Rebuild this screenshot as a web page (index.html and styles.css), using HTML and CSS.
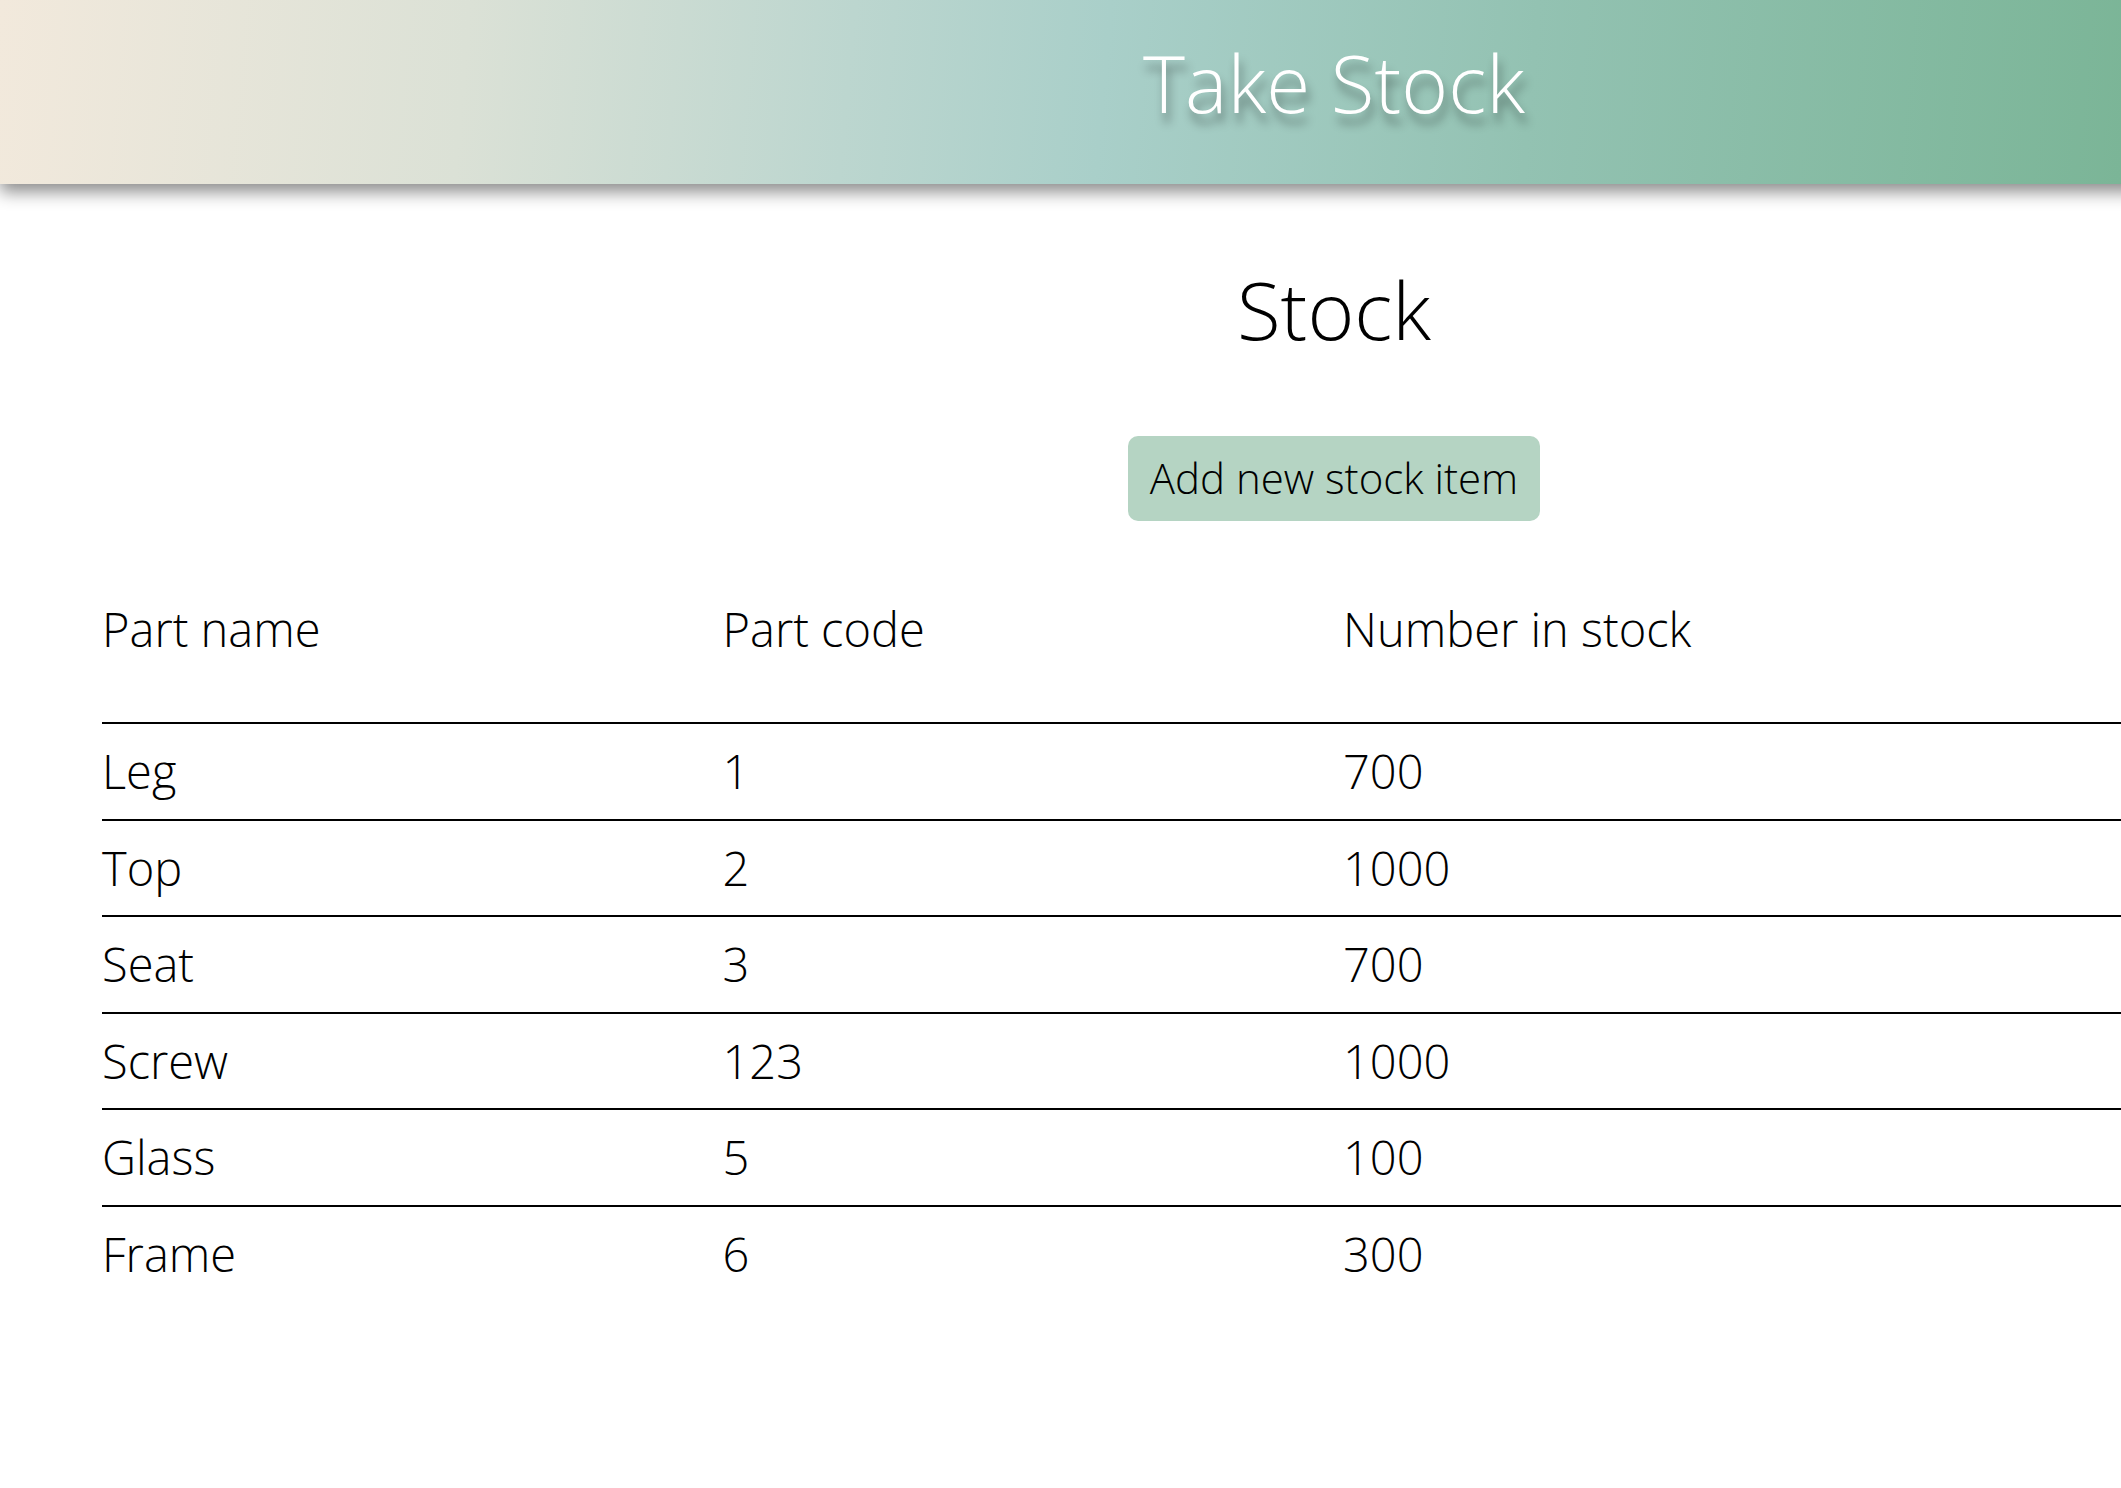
FILE: index.html
```html
<!DOCTYPE html>
<html lang="en">
<head>
<meta charset="utf-8">
<title>Take Stock</title>
<link rel="stylesheet" href="styles.css">
</head>
<body>
<div class="page">
  <header class="topbar">
    <h1 class="brand">Take Stock</h1>
  </header>
  <main class="content">
    <h2 class="title">Stock</h2>
    <div class="actions">
      <button class="btn-add" type="button">Add new stock item</button>
    </div>
    <table class="stock-table">
      <colgroup>
        <col class="col-name">
        <col class="col-code">
        <col class="col-count">
      </colgroup>
      <thead>
        <tr><th>Part name</th><th>Part code</th><th>Number in stock</th></tr>
      </thead>
      <tbody>
        <tr><td>Leg</td><td>1</td><td>700</td></tr>
        <tr><td>Top</td><td>2</td><td>1000</td></tr>
        <tr><td>Seat</td><td>3</td><td>700</td></tr>
        <tr><td>Screw</td><td>123</td><td>1000</td></tr>
        <tr><td>Glass</td><td>5</td><td>100</td></tr>
        <tr><td>Frame</td><td>6</td><td>300</td></tr>
      </tbody>
    </table>
  </main>
</div>
</body>
</html>
```

FILE: styles.css
```css
html {
  overflow: hidden;
}

body {
  margin: 0;
  background: #ffffff;
  color: #000000;
  font-family: "Open Sans", "Noto Sans", "Liberation Sans", sans-serif;
  font-weight: 300;
}

.page {
  width: 2668px;
}

.topbar {
  position: relative;
  z-index: 1;
  box-sizing: border-box;
  height: 184px;
  padding-top: 42px;
  background-color: #7bb597;
  background-image: linear-gradient(95deg, #f2e9dc 0%, #dbe1d6 22%, #bcd6cf 40%, #a9cfc9 52%, #93c2b2 72%, #7bb597 100%);
  background-size: 2121px 100%;
  background-repeat: no-repeat;
  box-shadow: 0 8px 16px rgba(0, 0, 0, 0.45);
}

.brand {
  margin: 0;
  font-size: 80px;
  line-height: 80px;
  font-weight: 300;
  color: #ffffff;
  text-align: center;
  text-shadow: 3px 10px 10px rgba(0, 0, 0, 0.38);
}

.content {
  padding-top: 85px;
}

.title {
  margin: 0;
  font-size: 80px;
  line-height: 80px;
  font-weight: 300;
  text-align: center;
}

.actions {
  display: flex;
  justify-content: center;
  margin-top: 87px;
}

.btn-add {
  box-sizing: border-box;
  height: 85px;
  padding: 14px 22px 15px;
  border: none;
  border-radius: 10px;
  background: #b5d4c3;
  color: #000000;
  font-family: inherit;
  font-weight: 350;
  font-size: 42px;
  line-height: 56px;
}

.stock-table {
  margin: 60px 0 0 102px;
  width: 2484px;
  table-layout: fixed;
  border-collapse: separate;
  border-spacing: 0;
  font-size: 47px;
  font-weight: 350;
  line-height: 63px;
}

.col-name,
.col-code {
  width: 620.5px;
}

.stock-table th {
  text-align: left;
  font-weight: 350;
  padding: 17px 0 61px 0;
}

.stock-table td {
  padding: 16px 0 15.5px 0;
  border-top: 2px solid #000000;
}
```
